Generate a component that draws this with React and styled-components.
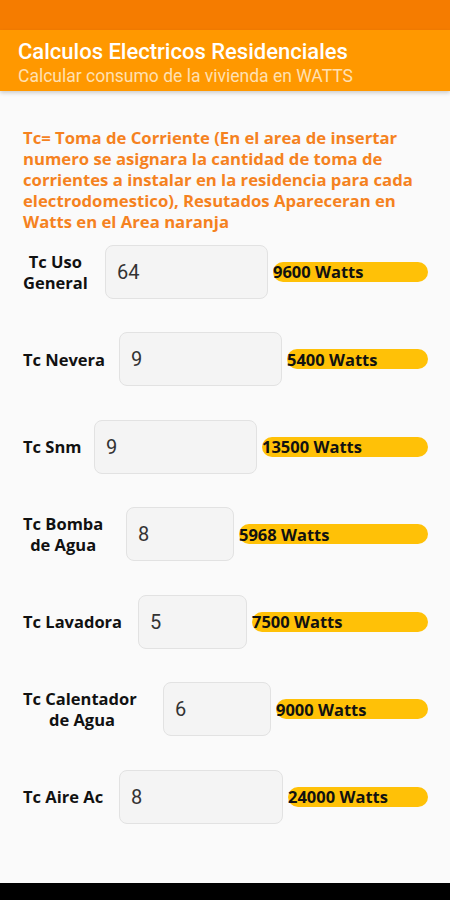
import React from "react";
import styled, { createGlobalStyle } from "styled-components";

const Global = createGlobalStyle`
  html, body { margin: 0; padding: 0; background: #fafafa; }
  #root { height: 900px; }
`;

const Screen = styled.div`
  height: 900px;
  display: flex;
  flex-direction: column;
  background: #fafafa;
  font-family: Roboto, "Noto Sans", sans-serif;
  overflow: hidden;
`;

const StatusBar = styled.div`
  height: 30px;
  background: #f57c00;
  flex: none;
`;

const AppBar = styled.header`
  height: 61px;
  flex: none;
  background: #ff9800;
  box-shadow: 0 2px 4px rgba(0, 0, 0, 0.18);
  padding: 9px 0 0 18px;
  box-sizing: border-box;
  position: relative;
  z-index: 1;
`;

const Title = styled.div`
  color: #ffffff;
  font-size: 22px;
  font-weight: 500;
  line-height: 26px;
`;

const Subtitle = styled.div`
  color: #ffe0b2;
  font-size: 17.5px;
  line-height: 20px;
  margin-top: 1px;
`;

const Content = styled.main`
  flex: 1;
  padding: 36px 22px 0 23px;
  display: flex;
  flex-direction: column;
`;

const Info = styled.p`
  margin: 0 0 12.5px 0;
  color: #f5821f;
  font-family: "Open Sans", "Noto Sans", sans-serif;
  font-weight: 700;
  font-size: 16.7px;
  line-height: 21px;
`;

const Rows = styled.div`
  display: flex;
  flex-direction: column;
  gap: 33.5px;
`;

const Row = styled.div`
  display: flex;
  align-items: center;
  height: 54px;
`;

const LabelCell = styled.div`
  width: ${(p) => p.$w}px;
  flex: none;
  display: flex;
  justify-content: flex-start;
`;

const Label = styled.span`
  display: inline-block;
  font-family: "Open Sans", "Noto Sans", sans-serif;
  font-weight: 700;
  font-size: 16.5px;
  line-height: 21px;
  color: #111;
  text-align: center;
  white-space: pre;
`;

const Field = styled.div`
  width: ${(p) => p.$w}px;
  height: 54px;
  box-sizing: border-box;
  flex: none;
  background: #f4f4f4;
  border: 1px solid #e2e2e2;
  border-radius: 8px;
  display: flex;
  align-items: center;
  padding-left: 11px;
  font-family: Roboto, "Noto Sans", sans-serif;
  font-size: 20px;
  color: #333;
`;

const Bar = styled.div`
  flex: 1;
  margin-left: 5px;
  height: 20px;
  background: #ffc107;
  border-radius: 10px;
  display: flex;
  align-items: center;
  font-family: "Open Sans", "Noto Sans", sans-serif;
  font-weight: 700;
  font-size: 16.5px;
  color: #111;
  white-space: nowrap;
`;

const NavBar = styled.div`
  height: 17px;
  flex: none;
  background: #000;
`;

const rows = [
  { label: "Tc Uso\nGeneral", lw: 82, w: 163, value: "64", watts: "9600 Watts" },
  { label: "Tc Nevera", lw: 96, w: 163, value: "9", watts: "5400 Watts" },
  { label: "Tc Snm", lw: 71, w: 163, value: "9", watts: "13500 Watts" },
  { label: "Tc Bomba\nde Agua", lw: 103, w: 108, value: "8", watts: "5968 Watts" },
  { label: "Tc Lavadora", lw: 115, w: 109, value: "5", watts: "7500 Watts" },
  { label: "Tc Calentador\n de Agua", lw: 140, w: 108, value: "6", watts: "9000 Watts" },
  { label: "Tc Aire Ac", lw: 96, w: 164, value: "8", watts: "24000 Watts" },
];

export default function App() {
  return (
    <Screen>
      <Global />
      <StatusBar />
      <AppBar>
        <Title>Calculos Electricos Residenciales</Title>
        <Subtitle>Calcular consumo de la vivienda en WATTS</Subtitle>
      </AppBar>
      <Content>
        <Info>
          Tc= Toma de Corriente (En el area de insertar numero se asignara la
          cantidad de toma de corrientes a instalar en la residencia para cada
          electrodomestico), Resutados Apareceran en Watts en el Area naranja
        </Info>
        <Rows>
          {rows.map((r) => (
            <Row key={r.label}>
              <LabelCell $w={r.lw}>
                <Label>{r.label}</Label>
              </LabelCell>
              <Field $w={r.w}>{r.value}</Field>
              <Bar>{r.watts}</Bar>
            </Row>
          ))}
        </Rows>
      </Content>
      <NavBar />
    </Screen>
  );
}
